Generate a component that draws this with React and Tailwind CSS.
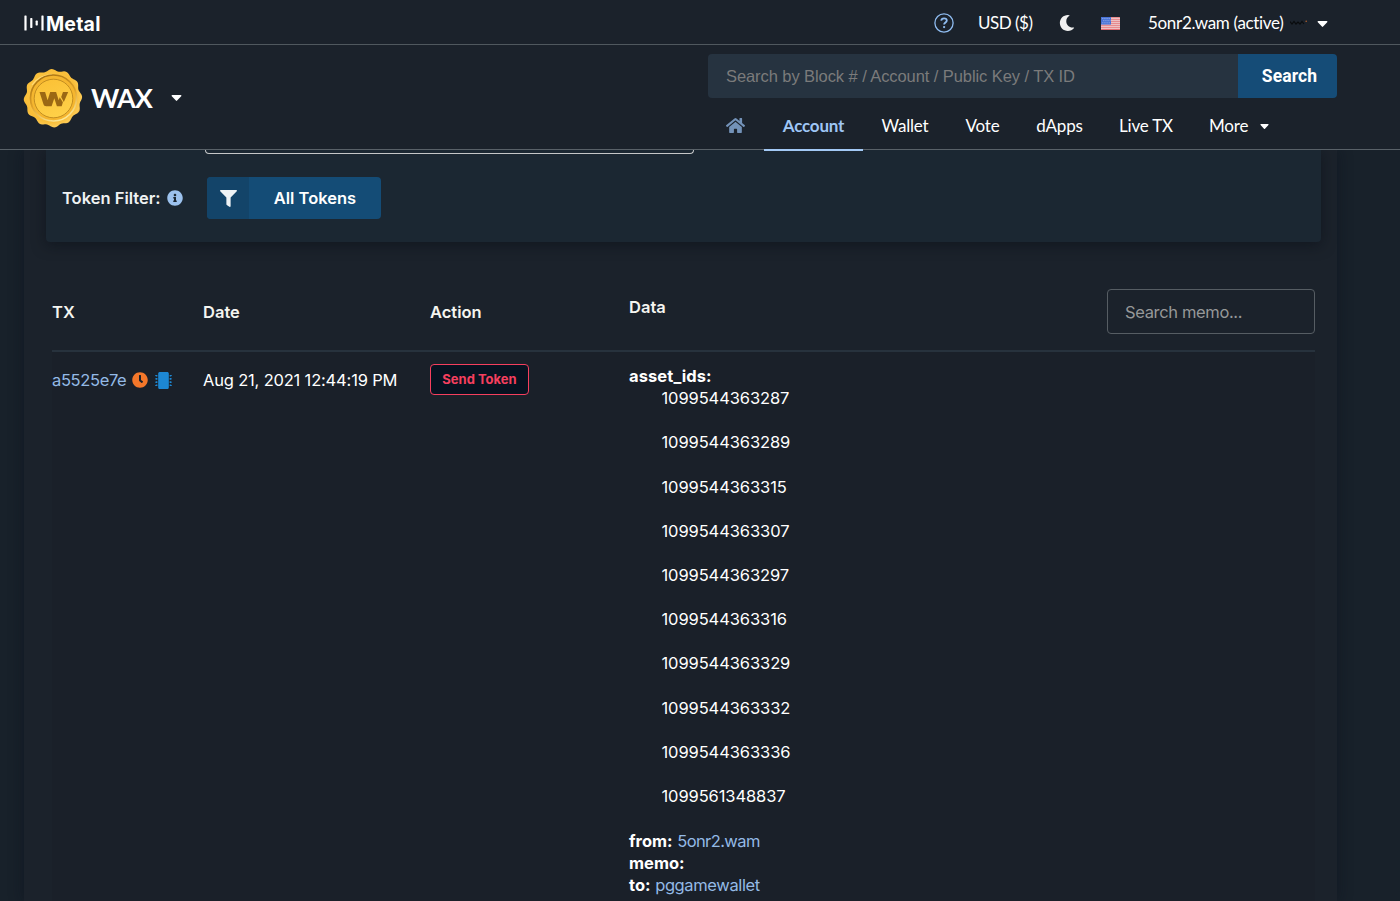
import React from 'react';
import { FaHome, FaFilter, FaInfoCircle, FaClock, FaMicrochip, FaMoon } from 'react-icons/fa';

const navItems = [
  { label: 'Account', width: 'w-[99px]', active: true },
  { label: 'Wallet', width: 'w-[84px]' },
  { label: 'Vote', width: 'w-[71px]' },
  { label: 'dApps', width: 'w-[83px]' },
  { label: 'Live TX', width: 'w-[90px]' },
];

const assetIds = [
  '1099544363287',
  '1099544363289',
  '1099544363315',
  '1099544363307',
  '1099544363297',
  '1099544363316',
  '1099544363329',
  '1099544363332',
  '1099544363336',
  '1099561348837',
];

// scalloped edge of the seal, 12 lobes
const sealEdge = Array.from({ length: 144 }, (_, i) => {
  const a = (i / 144) * Math.PI * 2;
  const r = 28.1 + 1.1 * Math.cos(12 * a + 0.6) + 0.3 * Math.sin(5 * a);
  return `${(30 + r * Math.cos(a)).toFixed(2)},${(30 + r * Math.sin(a)).toFixed(2)}`;
}).join(' ');

function Caret({ className }) {
  return (
    <svg viewBox="0 0 10 6" className={className} fill="currentColor">
      <path d="M.8 0h8.4c.7 0 1 .8.5 1.2L5.6 5.6a.8.8 0 0 1-1.2 0L.3 1.2C-.2.8.1 0 .8 0z" />
    </svg>
  );
}

function HelpIcon() {
  return (
    <svg viewBox="0 0 20 20" className="h-5 w-5" fill="none" stroke="#8fbcf0">
      <circle cx="10" cy="10" r="9.1" strokeWidth="1.3" />
      <path d="M7.2 7.7c.2-1.6 1.3-2.4 2.8-2.4 1.7 0 2.8.9 2.8 2.2 0 2-2.7 2-2.7 4.1" strokeWidth="1.8" />
      <circle cx="10.1" cy="14.1" r="1.15" fill="#8fbcf0" stroke="none" />
    </svg>
  );
}

function MetalMark() {
  return (
    <svg viewBox="0 0 21 16" className="h-4 w-[21px] shrink-0" fill="#fff">
      <rect x="0.4" y="0.5" width="2.2" height="15" rx="0.6" />
      <rect x="6.2" y="3.1" width="2.2" height="9.8" rx="0.6" />
      <rect x="11.6" y="5.6" width="2.2" height="4.8" rx="0.6" />
      <rect x="17.4" y="0.5" width="2.2" height="15" rx="0.6" />
    </svg>
  );
}

function Flag() {
  return (
    <svg viewBox="0 0 19 13" className="h-[13px] w-[19px]">
      <rect width="19" height="13" rx="0.6" fill="#f3e9ea" />
      <path d="M0 .8h19M0 2.8h19M0 4.8h19M0 6.8h19M0 8.8h19M0 10.8h19M0 12.6h19" stroke="#e26468" strokeWidth="1" />
      <rect width="10" height="7.6" fill="#4973d6" />
      <path d="M1.4 1.6h8M2.4 3.7h7M1.4 5.8h8" stroke="#b9c9f2" strokeWidth="0.9" strokeDasharray="0.9 1.2" />
    </svg>
  );
}

function WaxSeal() {
  return (
    <svg viewBox="0 0 60 60" className="h-[60px] w-[60px]">
      <defs>
        <radialGradient id="wax" cx="0.45" cy="0.45" r="0.6">
          <stop offset="0" stopColor="#ffd75a" />
          <stop offset="0.75" stopColor="#f9bd38" />
          <stop offset="0.9" stopColor="#fccb55" />
          <stop offset="1" stopColor="#eba42c" />
        </radialGradient>
        <linearGradient id="rim" x1="0.3" y1="0" x2="0.7" y2="1">
          <stop offset="0" stopColor="#a87313" />
          <stop offset="0.5" stopColor="#dfa128" />
          <stop offset="1" stopColor="#ffeea0" />
        </linearGradient>
        <linearGradient id="face" x1="0.3" y1="0" x2="0.7" y2="1">
          <stop offset="0" stopColor="#fbc136" />
          <stop offset="1" stopColor="#ffd149" />
        </linearGradient>
      </defs>
      <polygon points={sealEdge} fill="url(#wax)" />
      <path d="M9 17c4-6 11-10 20-10.500" fill="none" stroke="#ffe79a" strokeWidth="1.1" opacity="0.7" />
      <circle cx="30.500" cy="30" r="23" fill="#f5b62f" stroke="url(#rim)" strokeWidth="1.700" />
      <circle cx="30.500" cy="30.500" r="19.300" fill="url(#face)" stroke="#b5811c" strokeWidth="0.8" />
      <path d="M16.500 24h5.600l2.500 8.300 2.600-8.300h5.900l2.600 8.300 1-3 3.200 5-1.200 3.900h-4.800l-2.600-8-2.700 8h-5.400c-1.600 0-2.300-.7-2.800-2.200z" fill="#9b6814" />
      <path d="M40 24h5.200l-4.400 10-2.600-5z" fill="#9b6814" />
    </svg>
  );
}

function Header() {
  return (
    <header className="relative z-10 h-[150px] bg-[#1b222b] font-['Lato',sans-serif] text-[17px] tracking-[-0.2px] text-white">
      {/* Top bar */}
      <div className="flex h-[45px] items-center border-b border-[#50585e] pl-6 pt-[2px]">
        <div className="flex w-[910px] items-center gap-[1px]">
          <MetalMark />
          <span className="pt-0.5 font-['Inter',sans-serif] text-[19.500px] font-bold leading-5 tracking-[0.200px]">Metal</span>
        </div>
        <div className="w-11"><HelpIcon /></div>
        <span className="w-[81px] whitespace-nowrap tracking-[-0.500px]">USD ($)</span>
        <div className="w-[42px]"><FaMoon className="h-4 w-4 text-[#f0f0f0]" /></div>
        <div className="w-[47px]"><Flag /></div>
        <span className="w-[142px] whitespace-nowrap tracking-[-0.320px]">5onr2.wam (active)</span>
        <svg viewBox="0 0 18 6" className="h-1.5 w-[18px]" fill="none" strokeWidth="1.2">
          <path d="M0 1.500l2 2.500 2-2.500 2 2.500 2-2 2 2 2-2.500 2 2.500" stroke="#090b0d" />
          <circle cx="16.200" cy="1.300" r="0.8" fill="#b4602c" />
        </svg>
        <Caret className="ml-[9px] mt-0.5 h-1.5 w-[11px]" />
      </div>

      {/* Network and navigation */}
      <div className="flex h-[105px] border-b border-[#596168] pl-[23px]">
        <div className="flex w-[685px] items-center pb-[2px] pt-1">
          <WaxSeal />
          <span className="ml-2 w-[80px] text-[27px] font-bold tracking-[-1.100px]">WAX</span>
          <Caret className="h-1.5 w-[11px]" />
        </div>
        <div className="w-[629px] pt-[9px]">
          <div className="flex h-11">
            <div className="flex w-[530px] items-center rounded-l bg-[#263340] pl-[18px] pt-px font-['Liberation_Sans',Arial,sans-serif] text-[16.500px] tracking-[-0.080px] text-[#7b7b7b]">
              Search by Block # / Account / Public Key / TX ID
            </div>
            <button type="button" className="w-[99px] rounded-r bg-[#154c77] pl-1 font-['Roboto',sans-serif] text-[17.500px] font-bold tracking-[0.100px]">
              Search
            </button>
          </div>
          <nav className="flex h-[53px] pl-[18px] text-[17px]">
            <div className="flex w-[38px] items-center pt-px">
              <FaHome className="h-[19px] w-[19px] text-[#7392b8]" />
            </div>
            {navItems.map((item) => (
              <a
                key={item.label}
                className={
                  item.active
                    ? `${item.width} flex items-center justify-center border-b-2 border-[#a3c9f5] pt-[4px] font-bold text-[#9fc6f5]`
                    : `${item.width} flex items-center justify-center whitespace-nowrap pt-[3px]`
                }
              >
                {item.label}
              </a>
            ))}
            <a className="flex items-center gap-3 pl-[18px] pt-[3px]">
              More
              <Caret className="h-[5px] w-[9px]" />
            </a>
          </nav>
        </div>
      </div>
    </header>
  );
}

function Filters() {
  return (
    <section className="ml-[22px] mr-4 h-[92px] rounded-b bg-[#1b2732] shadow-[0_3px_14px_rgba(8,12,20,0.5)]">
      <div className="ml-[159px] h-[4px] w-[489px] rounded-b border border-t-0 border-[#c5c7c8]" />
      <div className="flex items-center pl-4 pt-[23px]">
        <span className="w-[105px] whitespace-nowrap text-[16.500px] font-semibold text-[#f0f2f3]">Token Filter:</span>
        <FaInfoCircle className="h-4 w-4 text-[#9cc2ee]" />
        <button type="button" className="ml-6 flex h-[42px] w-[174px] overflow-hidden rounded bg-[#144c76] text-[16.500px] font-semibold">
          <span className="flex h-full w-[42px] items-center justify-center bg-[#134469]">
            <FaFilter className="h-[17px] w-[17px] text-[#eef2f5]" />
          </span>
          <span className="flex h-full flex-1 items-center justify-center">All Tokens</span>
        </button>
      </div>
    </section>
  );
}

function Transactions() {
  return (
    <section className="ml-7 mr-[22px] mt-[47px] text-[16.500px] leading-[22.100px]">
      <div className="flex h-[63px] border-b-2 border-[#27323d] font-semibold text-[#f5f5f0]">
        <div className="w-[151px] pt-3">TX</div>
        <div className="w-[227px] pt-3">Date</div>
        <div className="w-[199px] pt-3">Action</div>
        <div className="flex flex-1 justify-between">
          <span className="pt-[7px]">Data</span>
          <div className="h-[45px] w-[208px] rounded border border-[#565d63] pl-[17px] pt-[11px] font-normal tracking-[-0.350px] text-[#969899]">
            Search memo...
          </div>
        </div>
      </div>
      <div className="flex h-[560px] bg-[#1a2029]">
        <div className="mt-[17px] flex h-[22px] w-[151px] items-center">
          <span className="w-20 tracking-[-0.350px] text-[#94bae6]">a5525e7e</span>
          <FaClock className="h-4 w-4 text-[#f4772a]" />
          <FaMicrochip className="ml-[7px] h-[17px] w-[17px] text-[#1d87d3]" />
        </div>
        <div className="w-[227px] whitespace-nowrap pt-[17px] tracking-[-0.180px]">Aug 21, 2021 12:44:19 PM</div>
        <div className="w-[199px] pt-3">
          <div className="flex h-[31px] w-[99px] items-center justify-center rounded border-[1.500px] border-[#f43f5e] bg-[#071321] text-[13px] font-bold text-[#f43f5e]">
            Send Token
          </div>
        </div>
        <div className="pt-[13px]">
          <div className="font-bold tracking-[0.100px]">asset_ids:</div>
          <ul className="pb-[0.500px] pl-[32.500px] tracking-[-0.100px]">
            {assetIds.map((id) => (
              <li key={id} className="h-[44.230px]">{id}</li>
            ))}
          </ul>
          <div><b className="font-bold">from:</b> <span className="tracking-[-0.600px] text-[#94bae6]">5onr2.wam</span></div>
          <div><b className="font-bold">memo:</b></div>
          <div><b className="font-bold">to:</b> <span className="tracking-[-0.380px] text-[#94bae6]">pggamewallet</span></div>
        </div>
      </div>
    </section>
  );
}

export default function App() {
  return (
    <div className="h-[901px] w-[1400px] overflow-hidden bg-[#18212a] font-['Inter',sans-serif] text-white">
      <Header />
      <main className="ml-6 h-[751px] w-[1313px] bg-[#1b222b] shadow-[0_0_14px_rgba(8,14,26,0.45)]">
        <Filters />
        <Transactions />
      </main>
    </div>
  );
}
